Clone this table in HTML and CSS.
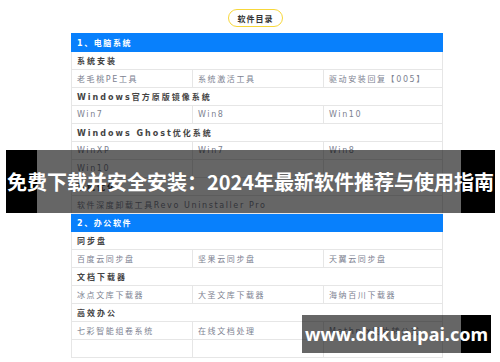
FILE: index.html
```html
<!DOCTYPE html>
<html lang="zh">
<head>
<meta charset="utf-8">
<title>软件目录</title>
<link rel="stylesheet" href="styles.css">
</head>
<body>
<div class="page">
  <div class="badge-row"><span class="badge">软件目录</span></div>
  <table class="catalog">
    <colgroup><col class="c1"><col class="c2"><col class="c3"></colgroup>
    <tr class="head"><td colspan="3">1、电脑系统</td></tr>
    <tr class="cat"><td colspan="3">系统安装</td></tr>
    <tr class="item"><td>老毛桃PE工具</td><td>系统激活工具</td><td>驱动安装回复【005】</td></tr>
    <tr class="cat"><td colspan="3">Windows官方原版镜像系统</td></tr>
    <tr class="item"><td>Win7</td><td>Win8</td><td>Win10</td></tr>
    <tr class="cat"><td colspan="3">Windows Ghost优化系统</td></tr>
    <tr class="item"><td>WinXP</td><td>Win7</td><td>Win8</td></tr>
    <tr class="item"><td>Win10</td><td></td><td></td></tr>
    <tr class="cat"><td colspan="3">系统优化</td></tr>
    <tr class="item"><td colspan="3">软件深度卸载工具Revo Uninstaller Pro</td></tr>
    <tr class="head"><td colspan="3">2、办公软件</td></tr>
    <tr class="cat"><td colspan="3">同步盘</td></tr>
    <tr class="item"><td>百度云同步盘</td><td>坚果云同步盘</td><td>天翼云同步盘</td></tr>
    <tr class="cat"><td colspan="3">文档下载器</td></tr>
    <tr class="item"><td>冰点文库下载器</td><td>大圣文库下载器</td><td>海纳百川下载器</td></tr>
    <tr class="cat"><td colspan="3">高效办公</td></tr>
    <tr class="item"><td>七彩智能组卷系统</td><td>在线文档处理</td><td>Mathpix图片转公式</td></tr>
    <tr class="item"><td>&nbsp;</td><td></td><td></td></tr>
  </table>
</div>
<div class="title-band"><span>免费下载并安全安装：2024年最新软件推荐与使用指南</span></div>
<div class="site-band"><span>www.ddkuaipai.com</span></div>
</body>
</html>
```

FILE: styles.css
```css
html, body {
  margin: 0;
  padding: 0;
  background: #fff;
  overflow: hidden;
  height: 362px;
}
body {
  font-family: "DejaVu Sans", "Noto Sans CJK SC", sans-serif;
  position: relative;
}
.page {
  width: 370px;
  margin: 0 auto;
  padding-top: 9px;
  transform: translateX(6px);
}
.badge-row {
  display: flex;
  justify-content: center;
  height: 18px;
  margin-bottom: 6px;
  margin-left: -1px;
}
.badge {
  box-sizing: border-box;
  width: 55px;
  height: 18px;
  border: 1.5px solid #f7d73a;
  border-radius: 9px;
  font-size: 8px;
  font-weight: bold;
  color: #333;
  letter-spacing: 1px;
  display: flex;
  align-items: center;
  justify-content: center;
  font-family: "Noto Sans CJK SC", sans-serif;
}
.catalog {
  width: 371px;
  border-collapse: collapse;
  table-layout: fixed;
}
.c1 { width: 121px; }
.c2 { width: 131px; }
.c3 { width: 119px; }
.catalog td {
  border: 1px solid #e6e6e6;
  height: 18px;
  padding: 0 0 0 5px;
  box-sizing: border-box;
  font-size: 8px;
  letter-spacing: 1.6px;
  white-space: nowrap;
  overflow: hidden;
  vertical-align: middle;
}
.head td {
  background: #0880fc;
  border-color: #0880fc;
  color: #fff;
  font-weight: bold;
}
.cat td {
  color: #444;
  font-weight: bold;
  letter-spacing: 2px;
}
.item td {
  color: #7d8291;
}
.title-band {
  position: absolute;
  left: 6px;
  top: 150px;
  width: 489px;
  height: 63px;
  background: linear-gradient(to right, #000 0, #000 31px, rgba(0,0,0,0.6) 31px, rgba(0,0,0,0.6) 455px, #000 455px, #000 489px);
  display: flex;
  align-items: center;
  justify-content: center;
}
.title-band span {
  color: #fff;
  font-family: "Noto Sans CJK SC", sans-serif;
  font-weight: bold;
  font-size: 20px;
  white-space: nowrap;
}
.site-band {
  position: absolute;
  left: 302px;
  top: 315px;
  width: 189px;
  height: 38px;
  background: linear-gradient(to right, rgba(0,0,0,0.6) 0, rgba(0,0,0,0.6) 159px, #000 159px, #000 189px);
  display: flex;
  align-items: center;
  justify-content: center;
}
.site-band span {
  color: #fff;
  font-family: "Noto Sans", sans-serif;
  font-weight: bold;
  font-size: 18px;
  white-space: nowrap;
}
```
